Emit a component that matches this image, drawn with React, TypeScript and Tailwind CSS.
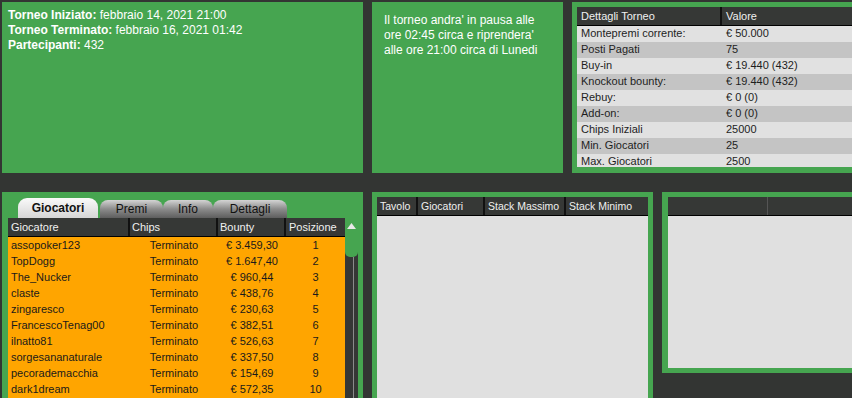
const players = [
  ['assopoker123', '€ 3.459,30', 1],
  ['TopDogg', '€ 1.647,40', 2],
  ['The_Nucker', '€ 960,44', 3],
  ['claste', '€ 438,76', 4],
  ['zingaresco', '€ 230,63', 5],
  ['FrancescoTenag00', '€ 382,51', 6],
  ['ilnatto81', '€ 526,63', 7],
  ['sorgesananaturale', '€ 337,50', 8],
  ['pecorademacchia', '€ 154,69', 9],
  ['dark1dream', '€ 572,35', 10],
]

const details = [
  ['Montepremi corrente:', '€ 50.000'],
  ['Posti Pagati', '75'],
  ['Buy-in', '€ 19.440 (432)'],
  ['Knockout bounty:', '€ 19.440 (432)'],
  ['Rebuy:', '€ 0 (0)'],
  ['Add-on:', '€ 0 (0)'],
  ['Chips Iniziali', '25000'],
  ['Min. Giocatori', '25'],
  ['Max. Giocatori', '2500'],
]

export default function App() {
  return (
    <div className="w-[852px] h-[398px] overflow-hidden bg-[#333533] pl-[2px] pt-[2px] font-['Liberation_Sans',Arial,sans-serif]">
      {/* top row */}
      <div className="flex gap-[9px] h-[171px]">
        <div className="w-[361px] shrink-0 bg-[#46a550] pl-[6px] pt-[6px] text-[12px] leading-[15px] text-white">
          <div><span className="font-bold">Torneo Iniziato:</span> febbraio 14, 2021 21:00</div>
          <div><span className="font-bold">Torneo Terminato:</span> febbraio 16, 2021 01:42</div>
          <div><span className="font-bold">Partecipanti:</span> 432</div>
        </div>
        <div className="w-[191px] shrink-0 bg-[#46a550] pl-[12px] pt-[11px] text-[12px] leading-[15px] text-white">
          <div>Il torneo andra' in pausa alle</div>
          <div>ore 02:45 circa e riprendera'</div>
          <div>alle ore 21:00 circa di Lunedi</div>
        </div>
        <div className="w-[300px] shrink-0 bg-[#46a550] pl-[5px] pt-[5px]">
          <div className="h-[160px] overflow-hidden text-[11px]">
            <div className="flex h-[19px] bg-[#363836] text-[#f0f0f0] border-b border-black">
              <div className="w-[145px] pl-[4px] leading-[18px] border-r-2 border-[#111]">Dettagli Torneo</div>
              <div className="flex-1 pl-[4px] leading-[18px]">Valore</div>
            </div>
            {details.map(([k, v], i) => (
              <div key={k} className={`flex h-[16px] leading-[15px] text-[#1e1e1e] ${i % 2 === 0 ? 'bg-[#e1e1e1]' : 'bg-[#c4c4c4]'}`}>
                <div className="w-[147px] pl-[4px]">{k}</div>
                <div className="flex-1 pl-[2px]">{v}</div>
              </div>
            ))}
          </div>
        </div>
      </div>

      {/* bottom row */}
      <div className="flex gap-[9px] mt-[19px] h-[206px]">
        <div className="w-[361px] shrink-0 bg-[#46a550] pl-[6px] pr-[5px] pt-[6px] overflow-hidden">
          <div className="flex items-end h-[20px] ml-[10px] text-[12px]">
            <div className="w-[80px] h-[20px] rounded-t-[9px] bg-gradient-to-b from-[#fafafa] to-[#d6d6d6] text-center leading-[20px] font-bold text-[#111]">Giocatori</div>
            <div className="ml-[2px] w-[63px] h-[18px] rounded-t-[8px] bg-gradient-to-b from-[#d4d4d4] via-[#8c8c8c] to-[#5e5e5e] text-center leading-[18px] text-[#111]">Premi</div>
            <div className="w-[50px] h-[18px] rounded-t-[8px] bg-gradient-to-b from-[#d4d4d4] via-[#8c8c8c] to-[#5e5e5e] text-center leading-[18px] text-[#111]">Info</div>
            <div className="w-[74px] h-[18px] rounded-t-[8px] bg-gradient-to-b from-[#d4d4d4] via-[#8c8c8c] to-[#5e5e5e] text-center leading-[18px] text-[#111]">Dettagli</div>
          </div>
          <div className="flex">
            <div className="w-[337px] text-[11px]">
              <div className="grid grid-cols-[122px_88px_68px_59px] h-[19px] bg-[#363836] text-[#f0f0f0] border-b border-black leading-[18px]">
                <div className="pl-[3px] border-r-2 border-[#111]">Giocatore</div>
                <div className="pl-[2px] border-r-2 border-[#111]">Chips</div>
                <div className="pl-[2px] border-r-2 border-[#111]">Bounty</div>
                <div className="pl-[3px]">Posizione</div>
              </div>
              {players.map(([name, bounty, pos]) => (
                <div key={name as string} className="grid grid-cols-[122px_88px_68px_59px] h-[16px] leading-[16px] bg-[#ffa500] text-[#1a1a1a]">
                  <div className="pl-[3px]">{name}</div>
                  <div className="text-center">Terminato</div>
                  <div className="text-center">{bounty}</div>
                  <div className="text-center">{pos}</div>
                </div>
              ))}
              <div className="h-[20px] bg-[#ffa500]" />
            </div>
            <div className="w-[13px] h-[200px] bg-[#353735] flex flex-col">
              <div className="h-[39px] bg-[#46a550] rounded-b-[5px] flex justify-center pt-[5px]">
                <svg width="9" height="6" viewBox="0 0 9 6">
                  <path d="M4.5 0 L9 6 L0 6 Z" fill="#e8e8e8" />
                </svg>
              </div>
              <div className="flex-1 flex justify-center">
                <div className="w-px ml-[3px] bg-[#8a8a8a]" />
              </div>
            </div>
          </div>
        </div>

        <div className="w-[281px] shrink-0 bg-[#46a550] px-[5px] pt-[5px] overflow-hidden">
          <div className="flex h-[19px] bg-[#363836] text-[#f0f0f0] border-b border-black text-[10.5px] leading-[18px]">
            <div className="w-[41px] pl-[3px] border-r-2 border-[#111]">Tavolo</div>
            <div className="w-[67px] pl-[3px] border-r-2 border-[#111]">Giocatori</div>
            <div className="w-[81px] pl-[3px] border-r-2 border-[#111]">Stack Massimo</div>
            <div className="flex-1 pl-[3px]">Stack Minimo</div>
          </div>
          <div className="h-[190px] bg-[#e0e0e0]" />
        </div>

        <div className="w-[200px] shrink-0 h-[181px] bg-[#46a550] pl-[6px] pt-[5px] pb-[5px] flex flex-col">
          <div className="flex h-[19px] bg-[#363836] border-b border-black">
            <div className="w-[100px] border-r border-[#555]" />
            <div className="flex-1" />
          </div>
          <div className="flex-1 bg-[#e0e0e0]" />
        </div>
      </div>
    </div>
  )
}
